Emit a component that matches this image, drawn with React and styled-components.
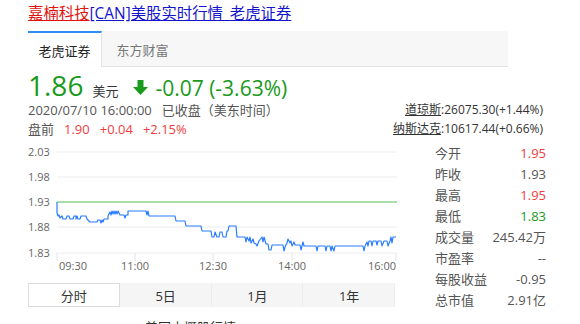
import styled, { createGlobalStyle } from 'styled-components'

const GlobalStyle = createGlobalStyle`
  body {
    margin: 0;
    background: #fff;
    font-family: "Open Sans", "Noto Sans CJK SC", sans-serif;
    color: #333;
  }
`

const Page = styled.div`
  width: 580px;
  height: 324px;
  overflow: hidden;
  padding: 4px 0 0 28px;
  box-sizing: border-box;
`

const Title = styled.h1`
  margin: 0;
  font-size: 15.4px;
  font-weight: normal;
  line-height: 20px;
  white-space: nowrap;
  a {
    text-decoration: underline;
    color: #1414cc;
  }
  a.brand {
    color: #e0140f;
  }
`

const TabBar = styled.div`
  display: flex;
  width: 480px;
  height: 36px;
  margin-top: 7px;
  background: #f7f7f7;
  border-bottom: 1px solid #e3e3e3;
  box-sizing: border-box;
`

const Tab = styled.div`
  width: 74px;
  display: flex;
  align-items: center;
  justify-content: center;
  font-size: 13px;
  box-sizing: border-box;
  color: ${p => (p.$active ? '#222' : '#777')};
  background: ${p => (p.$active ? '#fff' : 'transparent')};
  border-top: 2px solid ${p => (p.$active ? '#2e8ef2' : 'transparent')};
  border-right: 1px solid ${p => (p.$active ? '#e3e3e3' : 'transparent')};
  margin-bottom: ${p => (p.$active ? '-1px' : '0')};
  margin-left: ${p => (p.$active ? '0' : '4px')};
`

const QuoteHead = styled.div`
  display: flex;
  justify-content: space-between;
  width: 515px;
  margin-top: 2px;
`

const PriceRow = styled.div`
  display: flex;
  align-items: baseline;
  height: 32px;
  line-height: 32px;
  color: #1a9a1a;
  white-space: nowrap;
`

const Price = styled.span`
  font-size: 28px;
`

const Unit = styled.span`
  font-size: 13px;
  color: #333;
  margin: 0 15px 0 9px;
`

const Arrow = styled.svg`
  width: 15px;
  height: 15px;
  margin-right: 7px;
  align-self: center;
  margin-top: 4px;
`

const Change = styled.span`
  font-size: 21px;
`

const InfoLine = styled.div`
  font-size: 13px;
  line-height: 19px;
  color: #555;
  white-space: nowrap;
  span + span {
    margin-left: 10px;
  }
`

const Up = styled.span`
  color: #f03c3c;
`

const Indexes = styled.div`
  display: flex;
  flex-direction: column;
  align-items: flex-end;
  justify-content: flex-end;
  padding-bottom: 1px;
  font-size: 12px;
  line-height: 19px;
  color: #333;
  white-space: nowrap;
  u {
    text-decoration: underline;
  }
`

const Body = styled.div`
  display: flex;
  gap: 35px;
  margin-top: 4px;
`

const LeftCol = styled.div`
  width: 372px;
  display: flex;
  flex-direction: column;
`

const ChartSvg = styled.svg`
  display: block;
  width: 372px;
  height: 132px;
  font-family: "Open Sans", "Noto Sans CJK SC", sans-serif;
`

const Periods = styled.div`
  display: grid;
  grid-template-columns: repeat(4, 1fr);
  width: 367px;
  height: 24px;
  margin-top: 8px;
  background: #f5f5f5;
`

const Period = styled.div`
  display: flex;
  align-items: center;
  justify-content: center;
  font-size: 13px;
  color: #333;
  box-sizing: border-box;
  background: ${p => (p.$active ? '#fff' : 'transparent')};
  border: 1px solid ${p => (p.$active ? '#dcdcdc' : 'transparent')};
  border-right-color: ${p => (p.$active ? '#dcdcdc' : '#ececec')};
`

const Footnote = styled.div`
  margin: 10px 0 0 117px;
  font-size: 13px;
  color: #333;
`

const Stats = styled.div`
  width: 111px;
  display: flex;
  flex-direction: column;
`

const StatRow = styled.div`
  display: flex;
  justify-content: space-between;
  font-size: 13px;
  line-height: 21px;
  color: #555;
  white-space: nowrap;
`

const StatValue = styled.span`
  color: ${p => p.$color || '#555'};
`

// page coordinates of the intraday line, read off the picture
const pts = [
  [57, 204], [57, 215], [58, 218], [59, 217], [60, 220], [62, 218], [63, 221], [66, 221], [67, 218], [69, 218],
  [70, 221], [73, 221], [74, 218], [76, 218], [76, 221], [77, 218], [78, 221], [80, 221], [81, 218], [86, 218],
  [87, 221], [90, 224], [97, 224], [98, 222], [100, 222], [101, 225], [102, 222], [103, 224], [104, 221], [108, 221],
  [108, 218], [110, 214], [111, 217], [112, 213], [113, 216], [114, 213], [115, 216], [116, 213], [117, 216], [118, 213],
  [120, 217], [124, 217], [125, 220], [126, 217], [128, 217], [128, 213], [146, 213], [147, 217], [148, 213], [149, 218],
  [175, 218], [176, 223], [185, 223], [186, 228], [201, 228], [202, 233], [211, 233], [212, 239], [214, 239], [215, 234],
  [217, 239], [219, 239], [220, 234], [222, 234], [223, 239], [226, 239], [227, 233], [228, 233], [229, 228], [236, 228],
  [237, 239], [245, 239], [246, 244], [247, 239], [249, 243], [250, 239], [251, 245], [253, 241], [254, 245], [256, 246],
  [257, 248], [259, 243], [262, 239], [263, 244], [264, 239], [266, 246], [268, 246], [269, 252], [271, 252], [272, 247],
  [283, 247], [284, 253], [285, 249], [287, 245], [288, 241], [290, 245], [291, 243], [292, 248], [294, 244], [295, 247],
  [300, 247], [301, 252], [302, 248], [303, 244], [304, 248], [316, 248], [317, 253], [318, 248], [325, 248], [326, 253],
  [327, 248], [330, 248], [331, 253], [332, 248], [334, 253], [335, 248], [363, 248], [364, 253], [365, 248], [367, 244],
  [368, 248], [369, 243], [371, 243], [372, 248], [373, 243], [376, 243], [377, 247], [378, 243], [381, 243], [382, 248],
  [384, 243], [387, 243], [388, 248], [390, 243], [391, 239], [392, 245], [393, 239], [396, 239],
]
const linePath = pts.map(([x, y], i) => `${i ? 'L' : 'M'}${x - 28} ${y - 145}`).join(' ')

const grid = [
  { label: '2.03', y: 9 },
  { label: '1.98', y: 34 },
  { label: '1.93', y: 59 },
  { label: '1.88', y: 84 },
  { label: '1.83', y: 110 },
]

const times = [
  { label: '09:30', x: 29, anchor: 'start' },
  { label: '11:00', x: 107, anchor: 'middle' },
  { label: '12:30', x: 185, anchor: 'middle' },
  { label: '14:00', x: 264, anchor: 'middle' },
  { label: '16:00', x: 368, anchor: 'end' },
]

const stats = [
  ['今开', '1.95', '#f03c3c'],
  ['昨收', '1.93'],
  ['最高', '1.95', '#f03c3c'],
  ['最低', '1.83', '#1a9a1a'],
  ['成交量', '245.42万'],
  ['市盈率', '--'],
  ['每股收益', '-0.95'],
  ['总市值', '2.91亿'],
]

const Chart = () => (
  <ChartSvg viewBox="0 0 372 132">
    {grid.map(g => (
      <g key={g.label}>
        <line x1="29" x2="369" y1={g.y} y2={g.y} stroke="#ececec" strokeWidth="1" />
        <text x="0" y={g.y + 4} fontSize="11" fill="#666">{g.label}</text>
      </g>
    ))}
    {times.map(t => {
      const tx = t.anchor === 'start' ? 29 : t.anchor === 'end' ? 368 : t.x
      return <line key={t.label} x1={tx} x2={tx} y1="110" y2="118" stroke="#e2e2e2" />
    })}
    <line x1="29" x2="369" y1="59" y2="59" stroke="#8fd48f" strokeWidth="1.5" />
    <path d={linePath} fill="none" stroke="#2a7cff" strokeWidth="1.2" strokeLinejoin="round" />
    {times.map(t => (
      <text key={t.label} x={t.anchor === 'start' ? 31 : t.x} y="127" fontSize="11" fill="#666" textAnchor={t.anchor}>
        {t.label}
      </text>
    ))}
  </ChartSvg>
)

export default function App() {
  return (
    <>
      <GlobalStyle />
      <Page>
        <Title>
          <a className="brand">嘉楠科技</a><a>[CAN]美股实时行情_老虎证券</a>
        </Title>

        <TabBar>
          <Tab $active>老虎证券</Tab>
          <Tab>东方财富</Tab>
        </TabBar>

        <QuoteHead>
          <div>
            <PriceRow>
              <Price>1.86</Price>
              <Unit>美元</Unit>
              <Arrow viewBox="0 0 15 15">
                <path d="M4.5 0 H10.5 V7 H15 L7.5 15 L0 7 H4.5 Z" fill="#1a9a1a" />
              </Arrow>
              <Change>-0.07 (-3.63%)</Change>
            </PriceRow>
            <InfoLine>
              <span>2020/07/10 16:00:00</span>
              <span>已收盘（美东时间）</span>
            </InfoLine>
            <InfoLine>
              <span>盘前</span>
              <Up>1.90</Up>
              <Up>+0.04</Up>
              <Up>+2.15%</Up>
            </InfoLine>
          </div>
          <Indexes>
            <div><u>道琼斯</u>:26075.30(+1.44%)</div>
            <div><u>纳斯达克</u>:10617.44(+0.66%)</div>
          </Indexes>
        </QuoteHead>

        <Body>
          <LeftCol>
            <Chart />
            <Periods>
              <Period $active>分时</Period>
              <Period>5日</Period>
              <Period>1月</Period>
              <Period>1年</Period>
            </Periods>
            <Footnote>美国中概股行情</Footnote>
          </LeftCol>
          <Stats>
            {stats.map(([label, value, color]) => (
              <StatRow key={label}>
                <span>{label}</span>
                <StatValue $color={color}>{value}</StatValue>
              </StatRow>
            ))}
          </Stats>
        </Body>
      </Page>
    </>
  )
}
